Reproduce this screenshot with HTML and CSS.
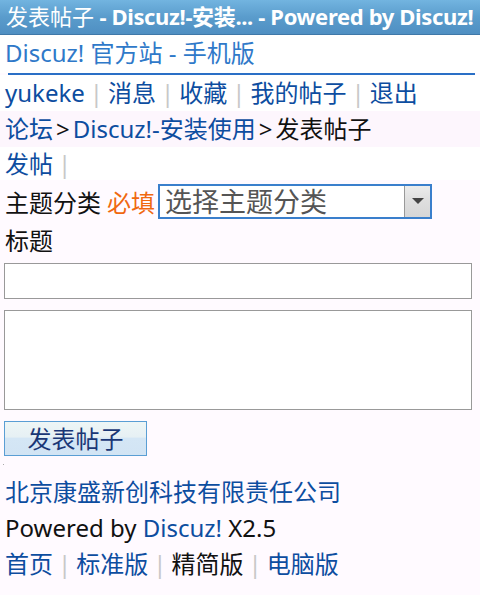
FILE: index.html
```html
<!DOCTYPE html>
<html lang="zh-CN">
<head>
<meta charset="utf-8">
<title>发表帖子</title>
<link rel="stylesheet" href="styles.css">
</head>
<body>
<div class="titlebar"><span class="cjk">发表帖子</span> - Discuz!-安装... - Powered by Discuz!</div>
<div class="header">Discuz! 官方站 - 手机版</div>
<div class="rule"></div>
<div class="row white">
  <a>yukeke</a><span class="sep">|</span><a>消息</a><span class="sep">|</span><a>收藏</a><span class="sep">|</span><a>我的帖子</a><span class="sep">|</span><a>退出</a>
</div>
<div class="row crumb">
  <a>论坛</a><span class="gt">&gt;</span><a>Discuz!-安装使用</a><span class="gt">&gt;</span><span class="cur">发表帖子</span>
</div>
<div class="row tabs"><a>发帖</a><span class="sep">|</span></div>
<form class="form">
  <div class="typeline">
    <span class="label">主题分类</span><span class="req">必填</span>
    <div class="select"><span class="seltext">选择主题分类</span><span class="arrow"><i></i></span></div>
  </div>
  <div class="label2">标题</div>
  <div class="input"></div>
  <div class="textarea"></div>
  <div class="btn">发表帖子</div>
  <div class="dot"></div>
</form>
<div class="footer">
  <div class="fline"><a>北京康盛新创科技有限责任公司</a></div>
  <div class="fline">Powered by <a>Discuz!</a> X2.5</div>
  <div class="fline"><a>首页</a><span class="sep">|</span><a>标准版</a><span class="sep">|</span><span class="cur">精简版</span><span class="sep">|</span><a>电脑版</a></div>
</div>
</body>
</html>
```
FILE: styles.css
```css
html, body {
  margin: 0;
  padding: 0;
}
body {
  width: 480px;
  height: 595px;
  overflow: hidden;
  background: #fffaff;
  font-family: "Noto Sans", "Noto Sans CJK SC", sans-serif;
  font-size: 24px;
  color: #111;
}
a {
  color: #0d4da0;
  text-decoration: none;
}
.titlebar {
  height: 34px;
  line-height: 32px;
  border-bottom: 1px solid #3f78a8;
  background: linear-gradient(#72b4e0, #5a9ccc 50%, #4f8fc2);
  color: #fff;
  font-weight: bold;
  font-size: 22px;
  letter-spacing: -0.35px;
  padding-left: 6px;
  white-space: nowrap;
  overflow: hidden;
}
.titlebar .cjk {
  font-weight: normal;
  letter-spacing: 0;
}
.header {
  height: 38px;
  line-height: 36px;
  background: #fff;
  color: #2f79c9;
  padding-left: 5px;
}
.rule {
  height: 2px;
  margin: 0 5px 0 8px;
  background: #2a6fc6;
}
.row {
  height: 36px;
  line-height: 36px;
  padding-left: 5px;
  white-space: nowrap;
}
.white {
  background: #fff;
}
.crumb {
  background: #fdf6fd;
}
.tabs {
  height: 33px;
  line-height: 33px;
  background: #fff;
}
.sep {
  color: #c8c8c8;
  margin: 0 5px;
}
.gt {
  color: #111;
  margin: 0 3px;
}
.cur {
  color: #111;
}
.form {
  margin: 0;
  padding: 3px 8px 0 4px;
}
.typeline {
  display: flex;
  align-items: center;
  height: 36px;
}
.label {
  margin-left: 1px;
}
.req {
  color: #f06810;
  margin-left: 6px;
  margin-right: 3px;
}
.select {
  width: 270px;
  height: 31px;
  border: 2px solid #3a7fcc;
  background: #fff;
  display: flex;
  align-items: center;
  justify-content: space-between;
}
.seltext {
  color: #555;
  padding-left: 5px;
  font-size: 27px;
  line-height: 31px;
}
.arrow {
  width: 25px;
  height: 31px;
  border-left: 1px solid #999;
  background: linear-gradient(#ececec, #dedede 50%, #d6d6d6);
  display: flex;
  align-items: center;
  justify-content: center;
}
.arrow i {
  width: 0;
  height: 0;
  border-left: 6px solid transparent;
  border-right: 6px solid transparent;
  border-top: 6px solid #444;
}
.label2 {
  height: 44px;
  line-height: 44px;
  margin-left: 1px;
}
.input {
  height: 34px;
  border: 1px solid #999;
  background: #fff;
}
.textarea {
  height: 98px;
  margin-top: 11px;
  border: 1px solid #999;
  background: #fff;
}
.btn {
  width: 141px;
  height: 33px;
  margin-top: 11px;
  border: 1px solid #5a9ed4;
  background: linear-gradient(#eef6f6, #e6f0f4 45%, #d4e6f5 50%, #d2e4f4);
  color: #1a3776;
  text-align: center;
  line-height: 33px;
}
.dot {
  width: 1px;
  height: 1px;
  background: #aaa;
  margin: 8px 0 0 -1px;
}
.footer {
  margin-top: 9px;
  padding-left: 5px;
}
.fline {
  height: 36px;
  line-height: 36px;
  white-space: nowrap;
}
```
